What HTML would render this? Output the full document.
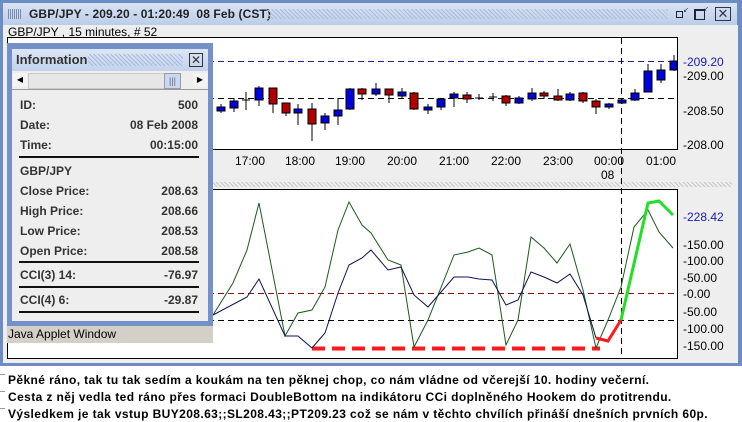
<!DOCTYPE html>
<html><head><meta charset="utf-8"><style>
*{margin:0;padding:0}
body{width:742px;height:422px;overflow:hidden;background:#fff;font-family:"Liberation Sans",Arial,sans-serif;position:relative}
.a{position:absolute}
.row{position:absolute;left:20px;width:178px;font:bold 12px "Liberation Sans",sans-serif;color:#333}
.row span{float:right}
.hl{position:absolute;left:19px;width:180px;height:2px;background:#111}
.bt{position:absolute;left:8px;font:bold 12px "Liberation Sans","DejaVu Sans",sans-serif;color:#000;white-space:nowrap;letter-spacing:0.4px}
</style></head><body>
<div class="a" style="left:0;top:0;width:742px;height:366px;background:#6c8cc4"></div>
<div class="a" style="left:3px;top:3px;width:734px;height:22px;background:linear-gradient(#d9e4f4,#bccde9)"></div>
<div class="a" style="left:8px;top:9px;width:14px;height:10px;background:repeating-linear-gradient(90deg,#7a8ab0 0 1px,transparent 1px 2px)"></div>
<div class="a" style="left:29px;top:7px;font:bold 12px 'Liberation Sans',sans-serif;color:#222;letter-spacing:0.1px">GBP/JPY - 209.20 - 01:20:49&nbsp; 08 Feb (CST)</div>
<div class="a" style="left:268px;top:9px;width:400px;height:10px;background:repeating-linear-gradient(45deg,#aebfdc 0 1px,transparent 1px 3px)"></div>
<div class="a" style="left:676px;top:11px;width:5px;height:5px;border:1px solid #223"></div>
<div class="a" style="left:683px;top:6px;font-size:7px;color:#223">↙</div>
<div class="a" style="left:694px;top:9px;width:8px;height:8px;border:1px solid #223;border-width:2px 1px 1px 2px"></div>
<div class="a" style="left:703px;top:5px;font-size:7px;color:#223">↙</div>
<div class="a" style="left:715px;top:7px;width:14px;height:12px;border:1px solid #334;font-size:13px;line-height:12px;text-align:center;color:#334">✕</div>
<div class="a" style="left:3px;top:25px;width:735px;height:338px;background:#eeeeee"></div>
<div class="a" style="left:8px;top:25px;font:12px 'Liberation Sans',sans-serif;color:#000">GBP/JPY , 15 minutes, # 52</div>
<div class="a" style="left:212px;top:182px;width:520px;height:5px;background:repeating-linear-gradient(45deg,#c8c8c8 0 1px,transparent 1px 3px)"></div>

<svg class="a" style="left:0;top:0" width="742" height="366" font-family="Liberation Sans,sans-serif" font-size="12">
<rect x="7.5" y="37.5" width="670" height="112" fill="#fff" stroke="#000"/>
<rect x="7.5" y="189.5" width="670" height="169" fill="#fff" stroke="#000"/>
<line x1="8" y1="61.5" x2="677" y2="61.5" stroke="#22229a" stroke-dasharray="6,4"/>
<line x1="8" y1="98.5" x2="677" y2="98.5" stroke="#000" stroke-dasharray="6,4"/>
<line x1="8" y1="293.5" x2="677" y2="293.5" stroke="#8b1010" stroke-dasharray="6,4"/>
<line x1="8" y1="320.5" x2="677" y2="320.5" stroke="#000" stroke-dasharray="6,4"/>
<line x1="621.5" y1="38" x2="621.5" y2="358" stroke="#000" stroke-dasharray="6,4"/>
<g stroke="#000" stroke-width="1">
<line x1="221" y1="104" x2="221" y2="113"/><rect x="217" y="107" width="8" height="4" fill="#0000d8"/>
<line x1="234" y1="98" x2="234" y2="112"/><rect x="230" y="101" width="8" height="7" fill="#0000d8"/>
<line x1="246" y1="92" x2="246" y2="110"/><line x1="242" y1="100" x2="250" y2="100"/>
<line x1="259" y1="86" x2="259" y2="106"/><rect x="255" y="88" width="8" height="12" fill="#0000d8"/>
<line x1="273" y1="88" x2="273" y2="113"/><rect x="269" y="88" width="8" height="16" fill="#b00000"/>
<line x1="286" y1="103" x2="286" y2="116"/><rect x="282" y="103" width="8" height="10" fill="#b00000"/>
<line x1="298" y1="104" x2="298" y2="125"/><rect x="294" y="109" width="8" height="4" fill="#0000d8"/>
<line x1="312" y1="103" x2="312" y2="141"/><rect x="308" y="109" width="8" height="15" fill="#b00000"/>
<line x1="325" y1="113" x2="325" y2="130"/><rect x="321" y="116" width="8" height="7" fill="#0000d8"/>
<line x1="338" y1="98" x2="338" y2="125"/><rect x="334" y="110" width="8" height="6" fill="#0000d8"/>
<line x1="350" y1="88" x2="350" y2="110"/><rect x="346" y="89" width="8" height="20" fill="#0000d8"/>
<line x1="362" y1="88" x2="362" y2="100"/><rect x="358" y="89" width="8" height="5" fill="#b00000"/>
<line x1="376" y1="83" x2="376" y2="96"/><rect x="372" y="89" width="8" height="5" fill="#0000d8"/>
<line x1="389" y1="89" x2="389" y2="103"/><rect x="385" y="89" width="8" height="6" fill="#b00000"/>
<line x1="402" y1="88" x2="402" y2="99"/><rect x="398" y="92" width="8" height="4" fill="#0000d8"/>
<line x1="414" y1="92" x2="414" y2="110"/><rect x="410" y="93" width="8" height="16" fill="#b00000"/>
<line x1="428" y1="104" x2="428" y2="114"/><rect x="424" y="107" width="8" height="3" fill="#0000d8"/>
<line x1="441" y1="98" x2="441" y2="110"/><rect x="437" y="99" width="8" height="8" fill="#0000d8"/>
<line x1="454" y1="92" x2="454" y2="107"/><rect x="450" y="94" width="8" height="4" fill="#0000d8"/>
<line x1="467" y1="92" x2="467" y2="103"/><rect x="463" y="95" width="8" height="4" fill="#b00000"/>
<line x1="479" y1="94" x2="479" y2="100"/><line x1="475" y1="98" x2="483" y2="98"/>
<line x1="493" y1="93" x2="493" y2="101"/><line x1="489" y1="97" x2="497" y2="97"/>
<line x1="506" y1="95" x2="506" y2="106"/><rect x="502" y="96" width="8" height="7" fill="#b00000"/>
<line x1="519" y1="96" x2="519" y2="104"/><rect x="515" y="98" width="8" height="5" fill="#0000d8"/>
<line x1="532" y1="88" x2="532" y2="101"/><rect x="528" y="93" width="8" height="6" fill="#0000d8"/>
<line x1="544" y1="91" x2="544" y2="99"/><rect x="540" y="93" width="8" height="3" fill="#b00000"/>
<line x1="558" y1="89" x2="558" y2="101"/><rect x="554" y="96" width="8" height="4" fill="#b00000"/>
<line x1="570" y1="92" x2="570" y2="101"/><rect x="566" y="94" width="8" height="6" fill="#0000d8"/>
<line x1="583" y1="92" x2="583" y2="103"/><rect x="579" y="93" width="8" height="8" fill="#b00000"/>
<line x1="596" y1="99" x2="596" y2="114"/><rect x="592" y="101" width="8" height="6" fill="#b00000"/>
<line x1="609" y1="103" x2="609" y2="109"/><rect x="605" y="104" width="8" height="3" fill="#0000d8"/>
<line x1="622" y1="99" x2="622" y2="104"/><rect x="618" y="100" width="8" height="3" fill="#0000d8"/>
<line x1="635" y1="89" x2="635" y2="101"/><rect x="631" y="93" width="8" height="7" fill="#0000d8"/>
<line x1="648" y1="64" x2="648" y2="92"/><rect x="644" y="71" width="8" height="21" fill="#0000d8"/>
<line x1="661" y1="64" x2="661" y2="83"/><rect x="657" y="70" width="8" height="10" fill="#0000d8"/>
<line x1="674" y1="55" x2="674" y2="71"/><rect x="670" y="61" width="7" height="9" fill="#0000d8"/>
</g>
<g fill="#000">
<text x="235" y="165">17:00</text><text x="285" y="165">18:00</text><text x="335" y="165">19:00</text>
<text x="387" y="165">20:00</text><text x="439" y="165">21:00</text><text x="491" y="165">22:00</text>
<text x="543" y="165">23:00</text><text x="594" y="165">00:00</text><text x="646" y="165">01:00</text>
<text x="601" y="179">08</text>
<text x="683" y="80">-209.00</text><text x="683" y="115">-208.50</text><text x="683" y="149">-208.00</text>
<text x="683" y="249">-150.00</text><text x="683" y="265">-100.00</text><text x="683" y="282">-50.00</text>
<text x="683" y="298">-0.00</text><text x="683" y="316">-50.00</text><text x="683" y="333">-100.00</text><text x="683" y="350">-150.00</text>
</g>
<text x="683" y="66" fill="#1a1ab0">-209.20</text>
<text x="683" y="221" fill="#1a1ab0">-228.42</text>
<line x1="312" y1="348.5" x2="600" y2="348.5" stroke="#ff1a1a" stroke-width="4" stroke-dasharray="13,7"/>
<polyline fill="none" stroke="#1a5a1a" stroke-width="1" points="213,315 233,283 247,250 259,203 285,336 298,313 312,310 325,287 338,230 349,202 362,225 371,233 388,260 401,265 414,347 428,320 454,255 468,252 479,248 492,255 506,345 518,320 531,237 544,248 557,263 570,244 583,290 596,348 608,320 621,287 634,227 648,210 659,232 673,248"/>
<polyline fill="none" stroke="#10105a" stroke-width="1" points="213,315 247,297 259,279 285,336 298,336 312,348 325,333 338,293 349,265 362,258 371,250 388,270 401,267 414,295 428,307 454,277 468,277 479,279 492,280 506,305 518,300 531,272 544,277 557,283 570,274 583,295 596,338"/>
<polyline fill="none" stroke="#ff1a1a" stroke-width="3" points="596,338 608,341 621,320"/>
<polyline fill="none" stroke="#22e022" stroke-width="3" points="621,320 648,203 659,201 673,215"/>
</svg>

<div class="a" style="left:7px;top:43px;width:206px;height:283px;background:#7390c8"></div>
<div class="a" style="left:12px;top:49px;width:196px;height:22px;background:linear-gradient(#dce6f5,#c3d2ec)"></div>
<div class="a" style="left:16px;top:52px;font:bold 13px 'Liberation Sans',sans-serif;color:#333">Information</div>
<div class="a" style="left:88px;top:54px;width:95px;height:12px;background:repeating-linear-gradient(45deg,#a8bbdc 0 1px,transparent 1px 3px)"></div>
<div class="a" style="left:189px;top:53px;width:12px;height:12px;border:1px solid #333;font-size:12px;line-height:12px;text-align:center;color:#333">✕</div>
<div class="a" style="left:12px;top:71px;width:196px;height:18px;background:#eee;border-bottom:1px solid #999"></div>
<div class="a" style="left:13px;top:73px;width:14px;height:14px;background:#f4f4f4;font-size:8px;line-height:14px;text-align:center">◀</div>
<div class="a" style="left:28px;top:73px;width:135px;height:14px;background:#e6e6e6;border:1px solid #ccc"></div>
<div class="a" style="left:164px;top:73px;width:15px;height:14px;background:#c9d8ef;border:1px solid #99a;font-size:9px;line-height:14px;text-align:center;color:#667">|||</div>
<div class="a" style="left:193px;top:73px;width:14px;height:14px;background:#f4f4f4;font-size:8px;line-height:14px;text-align:center">▶</div>
<div class="a" style="left:12px;top:90px;width:196px;height:231px;background:#eeeeee"></div>
<div class="row" style="top:98px">ID:<span>500</span></div>
<div class="row" style="top:118px">Date:<span>08 Feb 2008</span></div>
<div class="row" style="top:138px">Time:<span>00:15:00</span></div>
<div class="hl" style="top:156px"></div>
<div class="row" style="top:164px">GBP/JPY</div>
<div class="row" style="top:184px">Close Price:<span>208.63</span></div>
<div class="row" style="top:204px">High Price:<span>208.66</span></div>
<div class="row" style="top:224px">Low Price:<span>208.53</span></div>
<div class="row" style="top:244px">Open Price:<span>208.58</span></div>
<div class="hl" style="top:261px"></div>
<div class="row" style="top:268px">CCI(3) 14:<span>-76.97</span></div>
<div class="hl" style="top:286px"></div>
<div class="row" style="top:293px">CCI(4) 6:<span>-29.87</span></div>
<div class="hl" style="top:311px"></div>
<div class="a" style="left:7px;top:326px;width:206px;height:17px;background:#d4d0c8;font:12px 'Liberation Sans',sans-serif;color:#000;line-height:17px;padding-left:1px;box-sizing:border-box">Java Applet Window</div>

<div class="a" style="left:0;top:366px;width:742px;height:56px;background:#fff"></div>
<div class="a" style="left:0;top:374px;width:5px;height:1px;background:#999"></div>
<div class="a" style="left:0;top:391px;width:5px;height:1px;background:#999"></div>
<div class="a" style="left:0;top:408px;width:5px;height:1px;background:#999"></div>
<div class="bt" style="top:373px">Pěkné ráno, tak tu tak sedím a koukám na ten pěknej chop, co nám vládne od včerejší 10. hodiny večerní.</div>
<div class="bt" style="top:390px">Cesta z něj vedla ted ráno přes formaci DoubleBottom na indikátoru CCi doplněného Hookem do protitrendu.</div>
<div class="bt" style="top:407px">Výsledkem je tak vstup BUY208.63;;SL208.43;;PT209.23 což se nám v těchto chvílích přináší dnešních prvních 60p.</div>
</body></html>
